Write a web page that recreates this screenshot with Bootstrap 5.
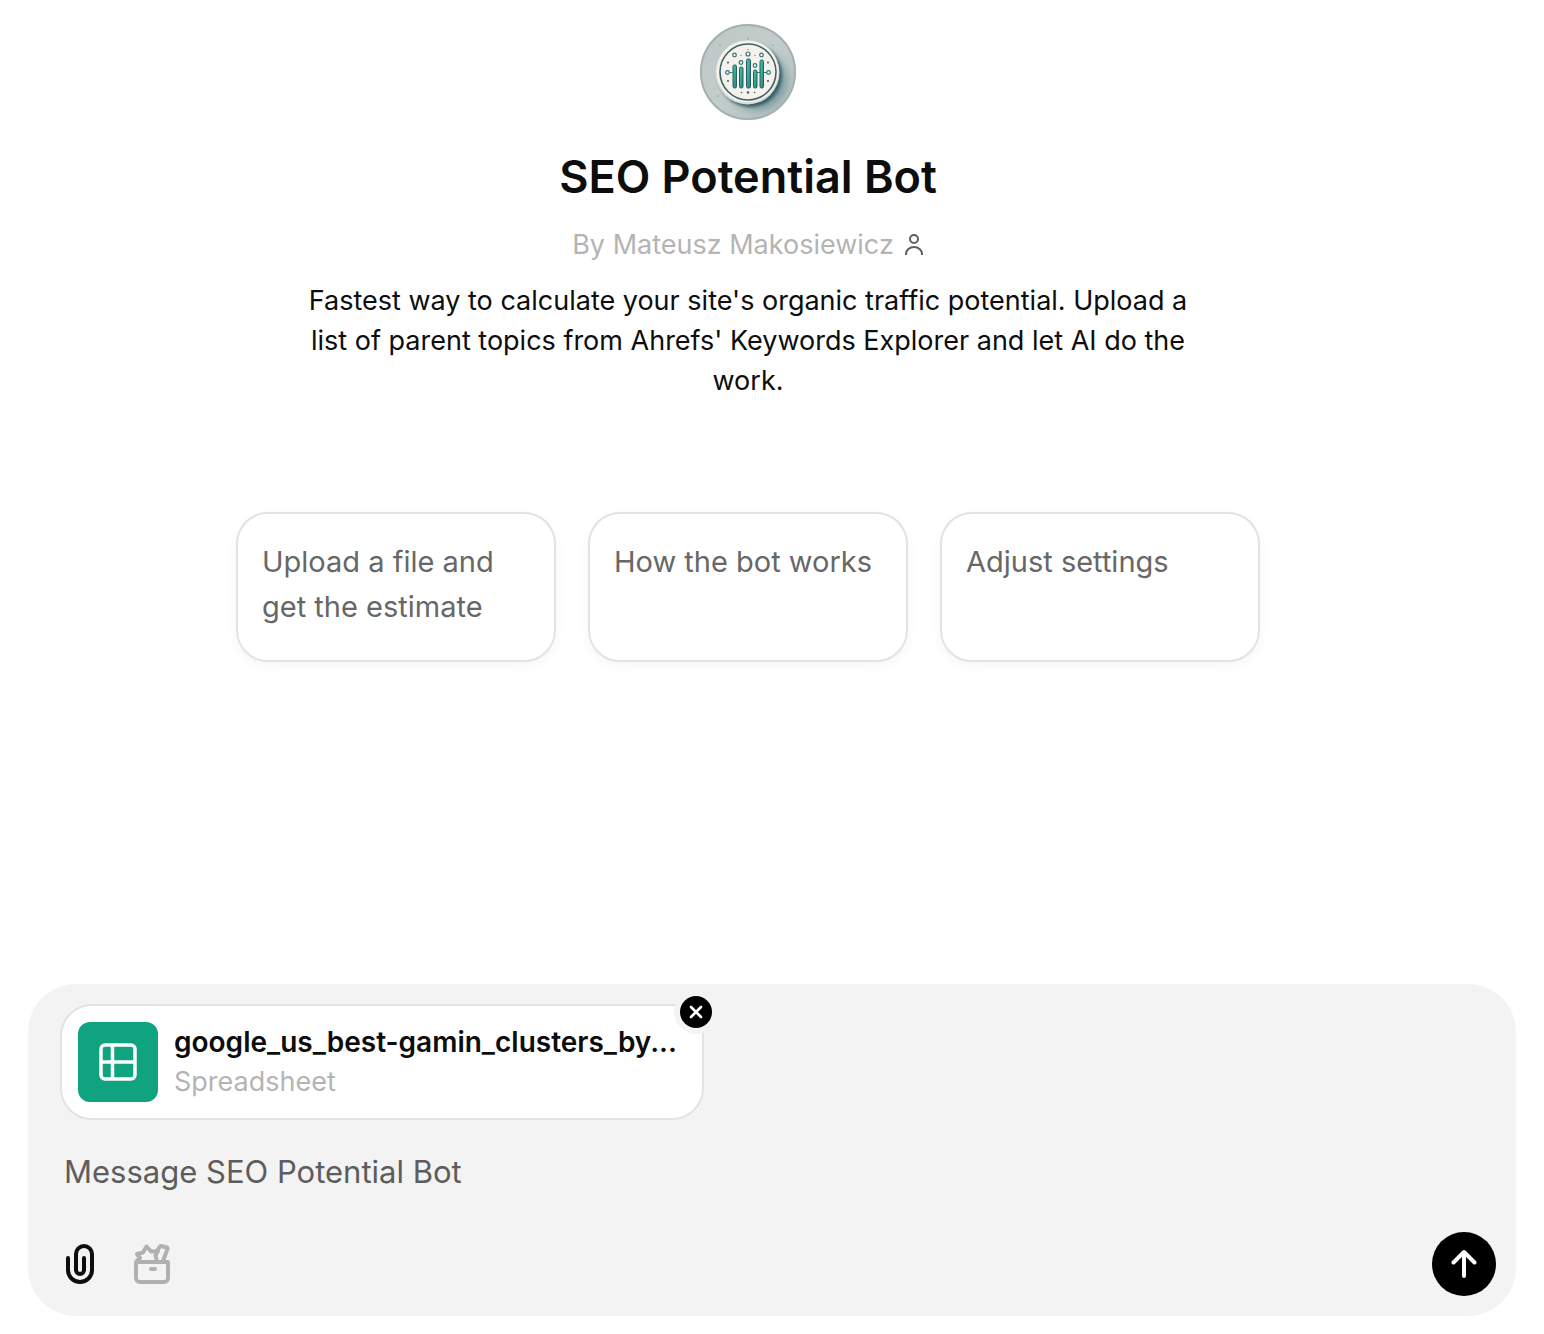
<!DOCTYPE html>
<html lang="en">
<head>
<meta charset="utf-8">
<meta name="viewport" content="width=device-width, initial-scale=1">
<title>SEO Potential Bot</title>
<link href="https://cdn.jsdelivr.net/npm/bootstrap@5.3.0/dist/css/bootstrap.min.css" rel="stylesheet">
<style>
  body { font-family: Inter, "Liberation Sans", sans-serif; color: #0d0d0d; background: #fff; }
  .intro { padding: 24px 48px 0 0; }
  .avatar { width: 96px; height: 96px; }
  .bot-title { font-size: 45px; line-height: 56px; font-weight: 600; margin: 29px 0 0; }
  .byline { font-size: 27px; line-height: 40px; margin-top: 20px; color: #b4b4b4; gap: 10px; }
  .about { font-size: 27px; line-height: 40px; max-width: 896px; margin: 16px 0 0; }
  .starters { gap: 32px; margin-top: 111px; width: 100%; max-width: 1024px; }
  .starter { flex: 1 1 0; min-height: 150px; padding: 25px 24px 24px; border: 2px solid #e3e3e3; border-radius: 32px; background: #fff; color: #676767; font-size: 29px; line-height: 45px; box-shadow: 0 4px 12px rgba(0,0,0,.04); }
  .composer { margin: 0 28px 18px; padding: 20px 20px 20px 32px; background: #f3f3f3; border-radius: 48px; }
  .attachment { width: 644px; max-width: 100%; padding: 16px; gap: 16px; border: 2px solid #e3e3e3; border-radius: 32px; background: #fff; line-height: 40px; font-size: 27px; }
  .file-tile { width: 80px; height: 80px; border-radius: 12px; background: #10a37f; }
  .file-name { font-size: 28px; font-weight: 600; }
  .file-kind { color: #b4b4b4; }
  .remove { top: -10px; right: -10px; width: 32px; height: 32px; background: #000; box-shadow: 0 0 0 6px #f3f3f3; }
  .message { display: block; width: 100%; height: 48px; margin: 28px 0 36px; padding: 0 4px; border: 0; background: transparent; font-size: 31px; line-height: 48px; resize: none; overflow: hidden; outline: 0; color: #0d0d0d; }
  .message::placeholder { color: #5d5d5d; opacity: 1; }
  .tools { gap: 32px; }
  .tool { width: 40px; height: 40px; background: transparent; }
  .send { width: 64px; height: 64px; background: #000; }
</style>
<script src="https://cdn.jsdelivr.net/npm/bootstrap@5.3.0/dist/js/bootstrap.bundle.min.js"></script>
</head>
<body>
<div class="d-flex flex-column min-vh-100">
  <main class="intro d-flex flex-column align-items-center text-center flex-grow-1">
    <svg class="avatar" viewBox="0 0 96 96" role="img" aria-label="Bot avatar">
      <defs>
        <linearGradient id="plate" x1="0" y1="0" x2="1" y2="1"><stop offset="0" stop-color="#bcc9c6"/><stop offset=".5" stop-color="#c3cdcb"/><stop offset="1" stop-color="#aebfbf"/></linearGradient>
        <linearGradient id="bars" x1="0" y1="0" x2="1" y2="1"><stop offset="0" stop-color="#3fd0a0"/><stop offset="1" stop-color="#2a7c80"/></linearGradient>
        <filter id="soft" x="-40%" y="-40%" width="180%" height="180%"><feGaussianBlur stdDeviation="4"/></filter>
        <filter id="edge" x="-20%" y="-20%" width="140%" height="140%"><feGaussianBlur stdDeviation="1.5"/></filter>
        <clipPath id="round"><circle cx="48" cy="48" r="48"/></clipPath>
      </defs>
      <g clip-path="url(#round)">
        <rect width="96" height="96" fill="url(#plate)"/>
        <circle cx="58" cy="57" r="29" fill="#5f858c" opacity=".65" filter="url(#soft)"/>
        <circle cx="50" cy="51" r="32" fill="#1f4753" opacity=".75" filter="url(#edge)"/>
        <circle cx="47.500" cy="48.500" r="32" fill="#d9dad3"/>
        <circle cx="47.500" cy="47.500" r="31" fill="#f4f2eb"/>
        <circle cx="48" cy="48" r="28" fill="#f4f2eb" stroke="#3d626b" stroke-width="1.600"/>
      </g>
      <circle cx="48" cy="48" r="47" fill="none" stroke="#a5b1af" stroke-width="2"/>
      <g fill="url(#bars)" stroke="#285b63" stroke-width="1">
        <rect x="33" y="41" width="3.500" height="23" rx="1.500"/><rect x="39.500" y="43" width="3.500" height="21" rx="1.500"/>
        <rect x="46.500" y="35" width="4" height="29" rx="1.500"/><rect x="53.500" y="46" width="3.500" height="18" rx="1.500"/>
        <rect x="60" y="36" width="3.500" height="28" rx="1.500"/>
      </g>
      <g fill="none" stroke="#2d7877" stroke-width="1.200">
        <circle cx="34.500" cy="31" r="1.800"/><circle cx="41" cy="38.500" r="1.800"/><circle cx="48" cy="30" r="2"/><circle cx="55" cy="41.500" r="1.800"/><circle cx="61.500" cy="31" r="1.800"/>
        <circle cx="27.500" cy="48.500" r="1.800"/><circle cx="68.500" cy="48.500" r="1.800"/><path d="M29.500 48.500h3M57 48.500h3M64 48.500h3"/>
      </g>
      <g fill="#365f66">
        <circle cx="28" cy="38.500" r="1"/><circle cx="68" cy="38.500" r="1"/><circle cx="28" cy="57" r="1"/><circle cx="68" cy="57" r="1"/>
        <circle cx="41" cy="31.500" r=".6"/><circle cx="55" cy="31.500" r=".6"/><circle cx="48" cy="25.500" r=".6"/>
        <circle cx="41.500" cy="68.500" r=".8"/><circle cx="48" cy="68.500" r="1.200"/><circle cx="54.500" cy="68.500" r=".8"/>
        <circle cx="20" cy="21" r=".5"/><circle cx="73" cy="21" r=".5"/><circle cx="48" cy="15" r=".7" opacity=".5"/><circle cx="18" cy="72" r=".5"/><circle cx="14" cy="65" r=".4"/>
      </g>
    </svg>
    <h1 class="bot-title">SEO Potential Bot</h1>
    <div class="byline d-flex align-items-center">
      <span>By Mateusz Makosiewicz</span>
      <svg width="20" height="24" viewBox="0 0 20 24" fill="none" stroke="#5d5d5d" stroke-width="2" aria-hidden="true"><circle cx="10" cy="6" r="4"/><path d="M2 22v-1a8 7 0 0 1 16 0v1"/></svg>
    </div>
    <p class="about">Fastest way to calculate your site's organic traffic potential. Upload a list of parent topics from Ahrefs' Keywords Explorer and let AI do the work.</p>
    <div class="starters d-flex">
      <button type="button" class="starter d-flex text-start">Upload a file and get the estimate</button>
      <button type="button" class="starter d-flex text-start">How the bot works</button>
      <button type="button" class="starter d-flex text-start">Adjust settings</button>
    </div>
  </main>
  <form class="composer">
    <div class="attachment position-relative d-flex align-items-center">
      <span class="file-tile d-flex align-items-center justify-content-center flex-shrink-0">
        <svg width="40" height="40" viewBox="0 0 40 40" fill="none" stroke="#fff" stroke-width="3.500" aria-hidden="true"><rect x="3" y="3" width="34" height="34" rx="4"/><path d="M14.500 3v34M3 20h34"/></svg>
      </span>
      <div class="flex-grow-1 overflow-hidden">
        <div class="file-name text-nowrap">google_us_best-gamin_clusters_by...</div>
        <div class="file-kind">Spreadsheet</div>
      </div>
      <button type="button" class="remove position-absolute d-flex align-items-center justify-content-center rounded-circle border-0 p-0" aria-label="Remove file">
        <svg width="14" height="14" viewBox="0 0 14 14" stroke="#fff" stroke-width="2.600" stroke-linecap="round" aria-hidden="true"><path d="M2 2l10 10M12 2L2 12"/></svg>
      </button>
    </div>
    <textarea class="message" rows="1" placeholder="Message SEO Potential Bot" aria-label="Message SEO Potential Bot"></textarea>
    <div class="d-flex align-items-center justify-content-between">
      <div class="tools d-flex align-items-center">
        <button type="button" class="tool border-0 p-0 d-flex" aria-label="Attach file">
          <svg width="40" height="40" viewBox="0 0 40 40" fill="none" stroke="#0d0d0d" stroke-width="4" stroke-linecap="round" aria-hidden="true"><path d="M8 14v12a12 12 0 0 0 24 0V10a8 8 0 0 0-16 0v16a4 4 0 0 0 8 0V14"/></svg>
        </button>
        <button type="button" class="tool border-0 p-0 d-flex" aria-label="Tools">
          <svg width="40" height="40" viewBox="0 0 40 40" fill="none" stroke="#b0b0b0" stroke-width="4" stroke-linecap="round" stroke-linejoin="round" aria-hidden="true"><path d="M4 18h32v16a4 4 0 0 1-4 4H8a4 4 0 0 1-4-4z"/><path d="M19 25h4"/><path d="M5 17l3-3-3-4 6-1.500 3.500-6 4.500 5 7-.500-2.500 4.500 1 3.500"/><path d="M25 7l3-4.500a1 1 0 0 1 1-.500l6 1.500a1 1 0 0 1 .500 1.500L31 17"/></svg>
        </button>
      </div>
      <button type="submit" class="send d-flex align-items-center justify-content-center rounded-circle border-0 p-0" aria-label="Send message">
        <svg width="32" height="32" viewBox="0 0 32 32" fill="none" stroke="#fff" stroke-width="4" stroke-linecap="round" stroke-linejoin="round" aria-hidden="true"><path d="M16 28V4M5.500 14.500L16 4l10.500 10.500"/></svg>
      </button>
    </div>
  </form>
</div>
</body>
</html>
